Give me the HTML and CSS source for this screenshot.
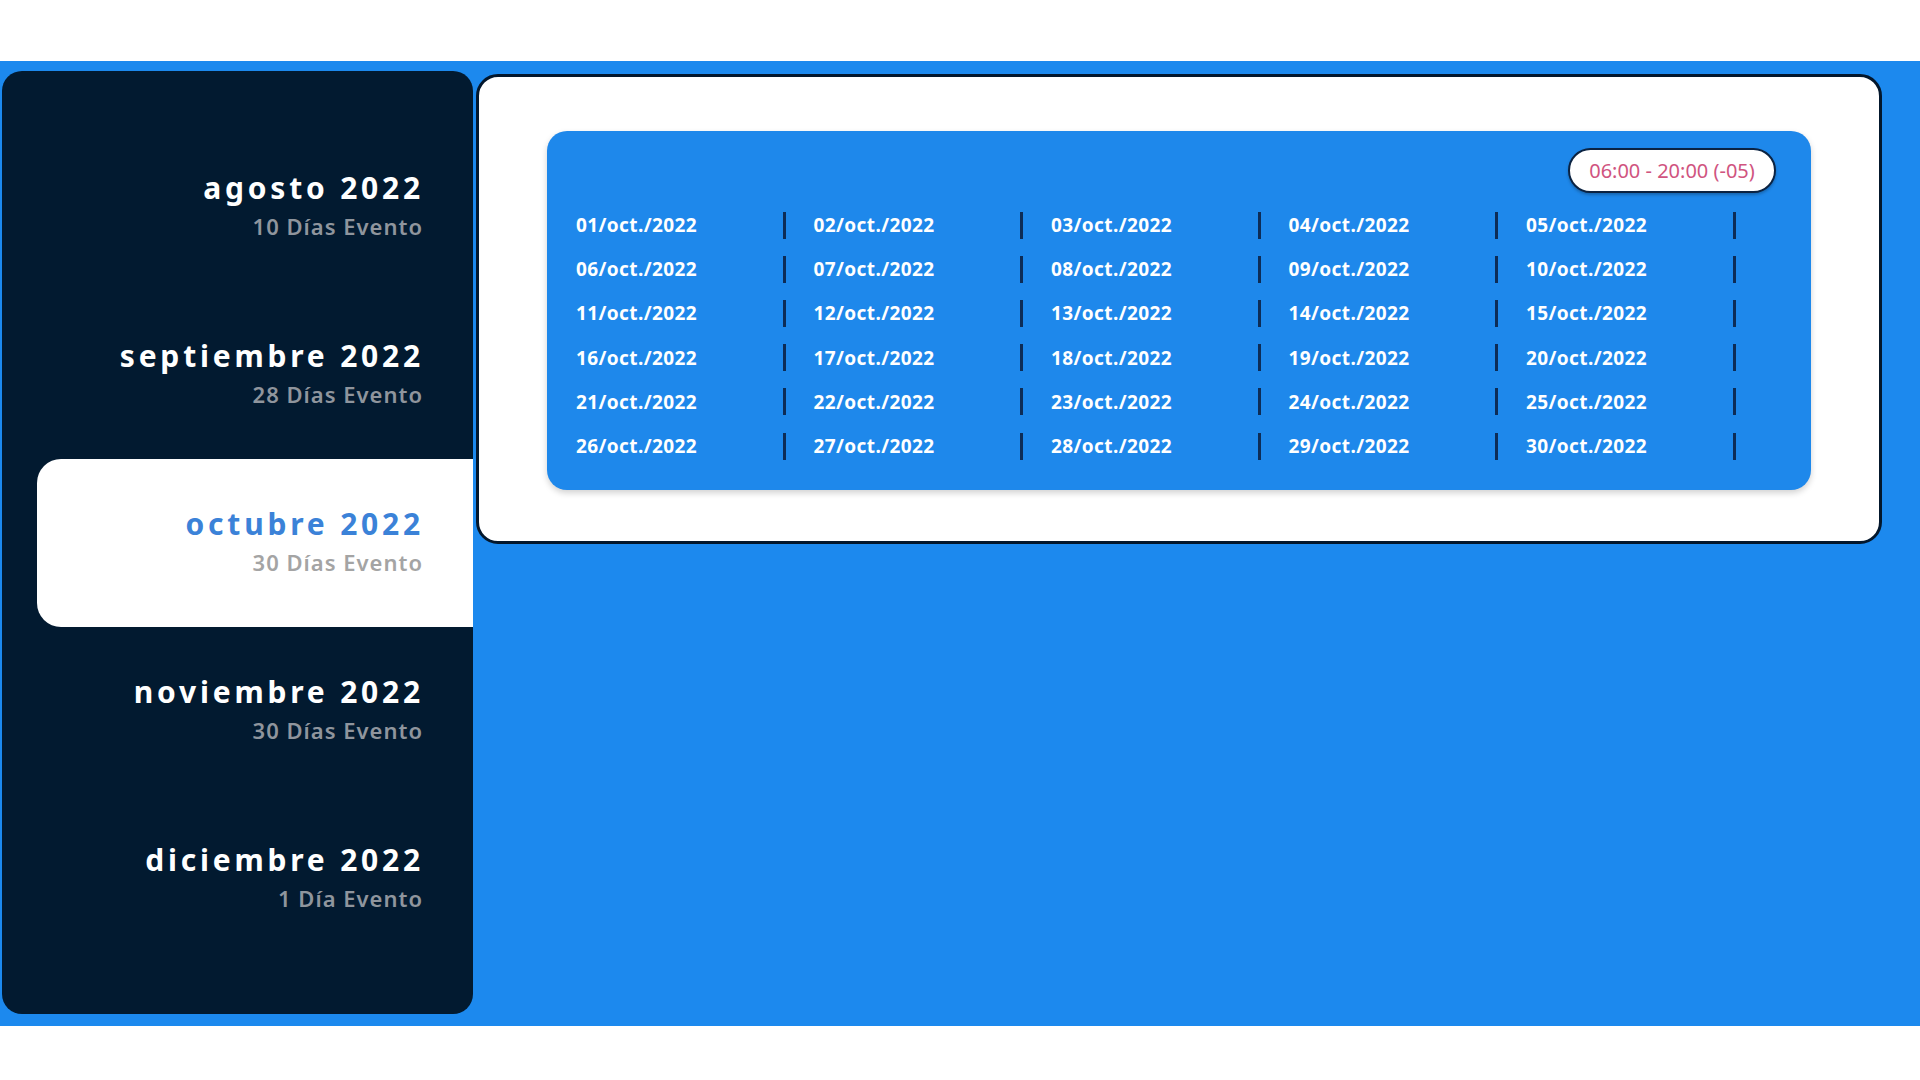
FILE: index.html
```html
<!DOCTYPE html>
<html lang="es">
<head>
<meta charset="utf-8">
<title>Eventos 2022</title>
<link rel="stylesheet" href="styles.css">
</head>
<body>
<div class="top-space"></div>
<div class="band">
  <aside class="sidebar">
    <div class="month">
      <div class="m-title">agosto 2022</div>
      <div class="m-sub">10 Días Evento</div>
    </div>
    <div class="month">
      <div class="m-title">septiembre 2022</div>
      <div class="m-sub">28 Días Evento</div>
    </div>
    <div class="month active">
      <div class="m-title">octubre 2022</div>
      <div class="m-sub">30 Días Evento</div>
    </div>
    <div class="month">
      <div class="m-title">noviembre 2022</div>
      <div class="m-sub">30 Días Evento</div>
    </div>
    <div class="month">
      <div class="m-title">diciembre 2022</div>
      <div class="m-sub">1 Día Evento</div>
    </div>
  </aside>
  <main class="card">
    <section class="panel">
      <div class="panel-head">
        <span class="pill">06:00 - 20:00 (-05)</span>
      </div>
      <div class="dates">
        <div class="cell"><span>01/oct./2022</span></div>
        <div class="cell"><span>02/oct./2022</span></div>
        <div class="cell"><span>03/oct./2022</span></div>
        <div class="cell"><span>04/oct./2022</span></div>
        <div class="cell"><span>05/oct./2022</span></div>
        <div class="cell"><span>06/oct./2022</span></div>
        <div class="cell"><span>07/oct./2022</span></div>
        <div class="cell"><span>08/oct./2022</span></div>
        <div class="cell"><span>09/oct./2022</span></div>
        <div class="cell"><span>10/oct./2022</span></div>
        <div class="cell"><span>11/oct./2022</span></div>
        <div class="cell"><span>12/oct./2022</span></div>
        <div class="cell"><span>13/oct./2022</span></div>
        <div class="cell"><span>14/oct./2022</span></div>
        <div class="cell"><span>15/oct./2022</span></div>
        <div class="cell"><span>16/oct./2022</span></div>
        <div class="cell"><span>17/oct./2022</span></div>
        <div class="cell"><span>18/oct./2022</span></div>
        <div class="cell"><span>19/oct./2022</span></div>
        <div class="cell"><span>20/oct./2022</span></div>
        <div class="cell"><span>21/oct./2022</span></div>
        <div class="cell"><span>22/oct./2022</span></div>
        <div class="cell"><span>23/oct./2022</span></div>
        <div class="cell"><span>24/oct./2022</span></div>
        <div class="cell"><span>25/oct./2022</span></div>
        <div class="cell"><span>26/oct./2022</span></div>
        <div class="cell"><span>27/oct./2022</span></div>
        <div class="cell"><span>28/oct./2022</span></div>
        <div class="cell"><span>29/oct./2022</span></div>
        <div class="cell"><span>30/oct./2022</span></div>
      </div>
    </section>
  </main>
</div>
</body>
</html>
```

FILE: styles.css
```css
* { box-sizing: border-box; }

html, body {
  margin: 0;
  padding: 0;
  background: #ffffff;
  font-family: "Noto Sans", "Open Sans", sans-serif;
}

.top-space { height: 61px; }

.band {
  height: 965px;
  background: #1c89ee;
  display: flex;
  align-items: flex-start;
  padding: 10px 0 0 2px;
}

.sidebar {
  width: 471px;
  height: 943px;
  background: #021a30;
  border-radius: 20px;
  padding: 52px 0 51px 0;
  display: flex;
  flex-direction: column;
}

.month {
  height: 168px;
  display: flex;
  flex-direction: column;
  justify-content: center;
  align-items: flex-end;
  margin-left: 35px;
  padding-right: 47px;
  border-radius: 24px 0 0 24px;
}

.m-title {
  font-size: 30px;
  line-height: 34px;
  font-weight: 700;
  letter-spacing: 3.8px;
  margin-right: 2px;
  margin-top: -4px;
  color: #ffffff;
}

.m-sub {
  margin-top: 8px;
  margin-right: 3px;
  font-size: 22px;
  line-height: 26px;
  font-weight: 600;
  letter-spacing: 1px;
  color: #8f959d;
}

.month.active { background: #ffffff; }
.month.active .m-title { color: #3b82d8; }
.month.active .m-sub { color: #a4a4a4; }

.card {
  margin: 3px 0 0 3px;
  width: 1406px;
  height: 470px;
  background: #ffffff;
  border: 3px solid #03172c;
  border-radius: 22px;
  padding: 54px 68px 51px 68px;
}

.panel {
  height: 359px;
  background: #1e88eb;
  border-radius: 20px;
  box-shadow: 0 3px 6px rgba(0, 0, 0, 0.18);
  padding: 17px 35px 0 29px;
}

.panel-head {
  display: flex;
  justify-content: flex-end;
}

.pill {
  height: 45px;
  width: 208px;
  display: flex;
  align-items: center;
  justify-content: center;
  background: #ffffff;
  border: 2px solid #0b2342;
  border-radius: 23px;
  color: #d0547f;
  font-size: 20px;
  box-shadow: 0 2px 3px rgba(0, 0, 0, 0.25);
}

.dates {
  margin-top: 10px;
  display: grid;
  grid-template-columns: repeat(5, 237.5px);
  grid-auto-rows: 44.2px;
}

.cell {
  display: flex;
  align-items: center;
  justify-content: space-between;
  padding-right: 28px;
  color: #ffffff;
  font-size: 19px;
  font-weight: 700;
  letter-spacing: 0.4px;
}

.cell::after {
  content: "";
  width: 3px;
  height: 27px;
  background: #0d2c56;
}
```
